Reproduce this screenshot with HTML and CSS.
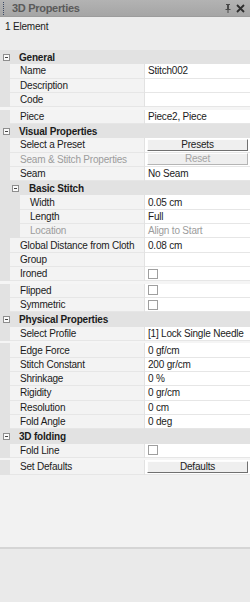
FILE: index.html
```html
<!DOCTYPE html>
<html lang="en">
<head>
  <meta charset="utf-8">
  <title>3D Properties</title>
  <link rel="stylesheet" href="styles.css">
</head>
<body>
  <div id="panel">
    <div class="titlebar">
      <span class="grip"></span>
      <span class="title">3D Properties</span>
      <span class="tools">
        <svg width="6" height="9" viewBox="0 0 6 9"><path d="M1 0h4v1h-1v4h1.5v1h-2v3h-1v-3h-2v-1h1.5v-4h-1z" fill="#4a4a4a"/></svg>
        <svg width="9" height="9" viewBox="0 0 9 9"><path d="M1 1l7 7M8 1l-7 7" stroke="#2e2e2e" stroke-width="1.8"/></svg>
      </span>
    </div>

    <div class="summary">1 Element</div>

    <div class="sheet">
      <!-- General -->
      <div class="group"><span class="toggle"></span>General</div>
      <div class="row"><div class="label">Name</div><div class="value">Stitch002</div></div>
      <div class="row"><div class="label">Description</div><div class="value"></div></div>
      <div class="row"><div class="label">Code</div><div class="value"></div></div>
      <div class="sep"></div>
      <div class="row"><div class="label">Piece</div><div class="value">Piece2, Piece</div></div>

      <!-- Visual Properties -->
      <div class="group"><span class="toggle"></span>Visual Properties</div>
      <div class="row"><div class="label">Select a Preset</div><div class="value"><span class="btn">Presets</span></div></div>
      <div class="row"><div class="label off">Seam &amp; Stitch Properties</div><div class="value"><span class="btn off">Reset</span></div></div>
      <div class="row"><div class="label">Seam</div><div class="value">No Seam</div></div>
      <div class="group sub"><span class="toggle"></span>Basic Stitch</div>
      <div class="row child"><div class="label">Width</div><div class="value">0.05 cm</div></div>
      <div class="row child"><div class="label">Length</div><div class="value">Full</div></div>
      <div class="row child"><div class="label off">Location</div><div class="value off">Align to Start</div></div>
      <div class="row"><div class="label">Global Distance from Cloth</div><div class="value">0.08 cm</div></div>
      <div class="row"><div class="label">Group</div><div class="value"></div></div>
      <div class="row"><div class="label">Ironed</div><div class="value"><span class="check"></span></div></div>
      <div class="sep"></div>
      <div class="row"><div class="label">Flipped</div><div class="value"><span class="check"></span></div></div>
      <div class="row"><div class="label">Symmetric</div><div class="value"><span class="check"></span></div></div>

      <!-- Physical Properties -->
      <div class="group"><span class="toggle"></span>Physical Properties</div>
      <div class="row"><div class="label">Select Profile</div><div class="value">[1] Lock Single Needle</div></div>
      <div class="sep"></div>
      <div class="row"><div class="label">Edge Force</div><div class="value">0 gf/cm</div></div>
      <div class="row"><div class="label">Stitch Constant</div><div class="value">200 gr/cm</div></div>
      <div class="row"><div class="label">Shrinkage</div><div class="value">0 %</div></div>
      <div class="row"><div class="label">Rigidity</div><div class="value">0 gr/cm</div></div>
      <div class="row"><div class="label">Resolution</div><div class="value">0 cm</div></div>
      <div class="row"><div class="label">Fold Angle</div><div class="value">0 deg</div></div>

      <!-- 3D folding -->
      <div class="group"><span class="toggle"></span>3D folding</div>
      <div class="row"><div class="label">Fold Line</div><div class="value"><span class="check"></span></div></div>
      <div class="sep"></div>
      <div class="row"><div class="label">Set Defaults</div><div class="value"><span class="btn">Defaults</span></div></div>
    </div>

    <div class="status"></div>
  </div>
</body>
</html>
```

FILE: styles.css
```css
body {
  margin: 0;
  font-family: 'Liberation Sans', Arial, sans-serif;
  font-size: 10px;
  letter-spacing: -0.2px;
  color: #1b1b1b;
  background: #ebebeb;
}
#panel {
  width: 250px;
  height: 602px;
  display: flex;
  flex-direction: column;
  background: #ebebeb;
}
.titlebar {
  height: 17px;
  box-sizing: border-box;
  display: flex;
  align-items: center;
  background: linear-gradient(#b3b3b3, #a5a5a5);
  border-bottom: 1px solid #9c9c9c;
}
.grip {
  width: 1px;
  height: 13px;
  margin: 0 7px 0 3px;
  border-left: 1px dotted #3c4a66;
}
.title {
  font-size: 11px;
  font-weight: bold;
  letter-spacing: -0.3px;
  color: #5a5a5a;
}
.tools {
  margin-left: auto;
  margin-right: 5px;
  display: flex;
  align-items: center;
  gap: 5px;
}
.summary {
  height: 33px;
  box-sizing: border-box;
  padding: 3px 0 0 5px;
  line-height: 14px;
  background: #ececec;
}
.sheet {
  flex: 1;
  background: #f2f2f2;
}
.group {
  height: 14.3px;
  display: flex;
  align-items: center;
  padding-left: 3px;
  font-weight: bold;
  background: #e2e2e2;
}
.group.sub {
  padding-left: 12px;
}
.toggle {
  position: relative;
  width: 5px;
  height: 5px;
  margin-right: 9px;
  border: 1px solid #8e8e8e;
  background: #fafafa;
}
.group.sub .toggle {
  margin-right: 10px;
}
.toggle::after {
  content: '';
  position: absolute;
  left: 1px;
  top: 2px;
  width: 3px;
  height: 1px;
  background: #444;
}
.row {
  height: 14.3px;
  display: grid;
  grid-template-columns: 134px 1fr;
  column-gap: 1px;
  padding-left: 10px;
  background: #e2e2e2;
}
.row.child {
  padding-left: 20px;
  grid-template-columns: 124px 1fr;
}
.label, .value {
  display: flex;
  align-items: center;
  box-sizing: border-box;
  border-bottom: 1px solid #e6e6e6;
  white-space: nowrap;
  overflow: hidden;
}
.label {
  padding-left: 10px;
  background: #f3f3f3;
  overflow: visible;
  z-index: 1;
}
.value {
  padding-left: 3px;
  background: #fff;
}
.off {
  color: #9c9c9c;
}
.sep {
  height: 2.5px;
  background: #f5f5f5;
}
.btn {
  flex: 1;
  height: 12px;
  box-sizing: border-box;
  margin: 0 2px 0 -1px;
  line-height: 10px;
  text-align: center;
  background: #efefef;
  border: 1px solid;
  border-color: #fdfdfd #707070 #707070 #fdfdfd;
  color: #222;
}
.btn.off {
  color: #a4a4a4;
  border-color: #fdfdfd #b5b5b5 #b5b5b5 #fdfdfd;
}
.check {
  width: 10px;
  height: 10px;
  box-sizing: border-box;
  border: 1px solid #9f9f9f;
  background: #fff;
}
.status {
  height: 53px;
  border-top: 2px solid #d5d5d5;
  background: #eaeaea;
}
```
